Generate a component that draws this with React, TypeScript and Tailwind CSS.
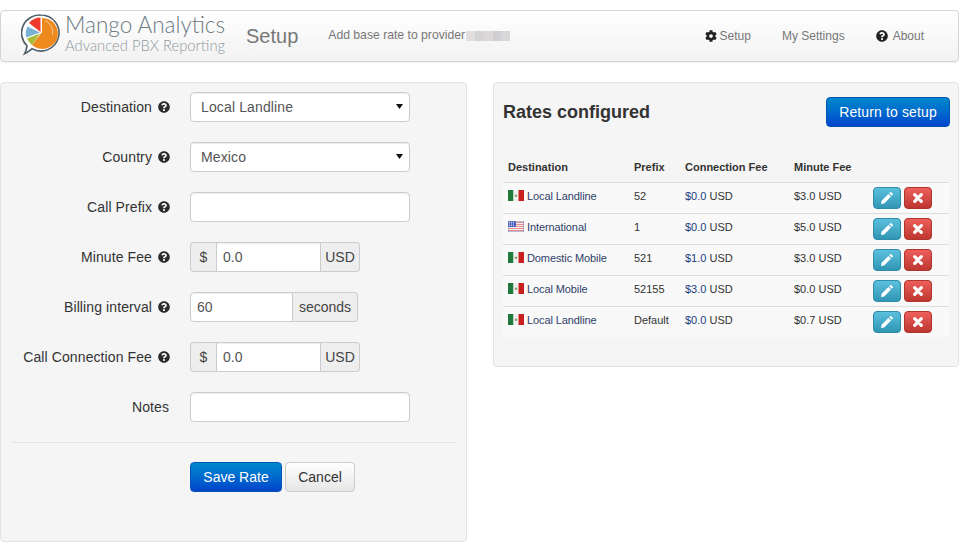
import React from "react";
import { FaCog, FaQuestionCircle } from "react-icons/fa";

const sans = "font-['Liberation_Sans',Arial,sans-serif]";

function Logo() {
  return (
    <svg width="42" height="46" viewBox="20 14 42 46" className="shrink-0">
      <path d="M40 16a18 18 0 1 1-9 33.600c-2 1.600-4 3.600-7.500 5.200c1.200-2.200 2.200-5 2.500-8A18 18 0 0 1 40 16z" fill="#fff" stroke="#4f5f69" strokeWidth="1.600" />
      <path d="M41 19a15.500 15.500 0 1 1-10 27l10-13z" fill="#ee8a1d" />
      <path d="M39.500 33L28 24a15 15 0 0 1 11.500-5.500z" fill="#ec3a2d" />
      <path d="M39 33.500L26.500 27.500a15 15 0 0 0-1.200 11z" fill="#78b1d3" />
      <path d="M39 34.500L26 39.500a15 15 0 0 0 5 6.500z" fill="#a7bd38" />
      <path d="M44 21.500a12.500 12.500 0 0 1 7.500 14" fill="none" stroke="#fff" strokeOpacity="0.7" strokeWidth="0.800" />
    </svg>
  );
}

function Help() {
  return <FaQuestionCircle className="text-[12px] text-[#2b2b2b] shrink-0" />;
}

function Row({ label, help = true, children }: { label: string; help?: boolean; children: React.ReactNode }) {
  return (
    <div className="flex items-center h-[30px] mb-5">
      <div className="w-[169px] shrink-0 flex items-center justify-end gap-[5px] text-[#333] text-[14px]">
        <span className="tracking-[0.1px] mr-[1px]">{label}</span>
        {help && <Help />}
      </div>
      <div className="ml-[20px]">{children}</div>
    </div>
  );
}

const inputCls = "h-[30px] bg-white border border-[#ccc] text-[14px] text-[#555] outline-none shadow-[inset_0_1px_1px_rgba(0,0,0,0.075)]";

function Sel({ value }: { value: string }) {
  return (
    <div className="relative w-[220px]">
      <select defaultValue={value} className={`${inputCls} w-full px-[10px] tracking-[0.13px] rounded-[4px] appearance-none`}>
        <option>{value}</option>
      </select>
      <svg width="7" height="5" viewBox="0 0 7 5" className="absolute right-[7px] top-[12px]">
        <path d="M0 0h7L3.500 5z" fill="#111" />
      </svg>
    </div>
  );
}

function Addon({ children, className = "" }: { children: React.ReactNode; className?: string }) {
  return (
    <span className={`h-[30px] flex items-center justify-center bg-[#eee] border border-[#ccc] text-[14px] text-[#444] ${className}`}>
      {children}
    </span>
  );
}

function MoneyInput() {
  return (
    <div className="flex">
      <Addon className="w-[26px] rounded-l-[4px] border-r-0">$</Addon>
      <input defaultValue="0.0" className={`${inputCls} w-[105px] px-[6px]`} />
      <Addon className="w-[39px] rounded-r-[4px] border-l-0">USD</Addon>
    </div>
  );
}

function Flag({ us }: { us?: boolean }) {
  if (us) {
    return (
      <svg width="16" height="11" viewBox="0 0 16 11" className="shrink-0 mt-[2px]">
        <rect width="16" height="11" fill="#f6f2f4" />
        <path d="M0 1.500h16M0 3.500h16M0 5.500h16M0 7.500h16M0 9.500h16" stroke="#e58a88" strokeWidth="1" />
        <rect width="8" height="6" fill="#4a62c0" />
        <path d="M1 1.500h6M1 3h6M1 4.500h6" stroke="#e6e9f8" strokeWidth="0.800" strokeDasharray="1 1" />
        <rect x="0.250" y="0.250" width="15.500" height="10.500" fill="none" stroke="#7c86b4" strokeWidth="0.500" />
      </svg>
    );
  }
  return (
    <svg width="16" height="11" viewBox="0 0 16 11" className="shrink-0 mt-[2px]">
      <rect width="5.500" height="11" fill="#1f7a3c" />
      <rect x="5.500" width="5" height="11" fill="#eef2ee" />
      <rect x="10.500" width="5.500" height="11" fill="#c8201f" />
      <circle cx="8" cy="5.700" r="1.300" fill="#9c9a78" />
    </svg>
  );
}

function PencilIcon() {
  return (
    <svg width="12" height="12" viewBox="0 0 12 12">
      <path d="M0 12l.6-3.200L7.400 2l2.600 2.600L3.200 11.400zM8.200 1.200L9.200.2a.7.7 0 0 1 1 0l1.600 1.600a.7.7 0 0 1 0 1l-1 1z" fill="#fff" />
    </svg>
  );
}

function CrossIcon() {
  return (
    <svg width="10" height="10" viewBox="0 0 10 10">
      <path d="M1.700 1.700l6.600 6.600M8.300 1.700L1.700 8.300" stroke="#fff" strokeWidth="3.200" strokeLinecap="round" />
    </svg>
  );
}

const rates = [
  ["Local Landline", "52", "$0.0 USD", "$3.0 USD", false],
  ["International", "1", "$0.0 USD", "$5.0 USD", true],
  ["Domestic Mobile", "521", "$1.0 USD", "$3.0 USD", false],
  ["Local Mobile", "52155", "$3.0 USD", "$0.0 USD", false],
  ["Local Landline", "Default", "$0.0 USD", "$0.7 USD", false],
] as const;

const blueBtn = "bg-gradient-to-b from-[#0088cc] to-[#0044cc] border border-[#0055b3] text-white rounded-[4px]";

export default function App() {
  return (
    <div className={`${sans} w-[959px] h-[556px] bg-white pt-[10px] overflow-hidden`}>
      <header className="h-[52px] flex items-center border border-[#d4d4d4] rounded-[4px] bg-gradient-to-b from-white to-[#f2f2f2] shadow-[0_1px_2px_rgba(0,0,0,0.06)]">
        <div className="ml-[20px]"><Logo /></div>
        <div className="ml-[2px] w-[169px] -mt-[6px] flex flex-col font-['Lato',sans-serif] font-light text-[#6d7a82] leading-none whitespace-nowrap">
          <span className="text-[22.500px] leading-[23px]">Mango Analytics</span>
          <span className="text-[14.800px] leading-[15px] mt-[2px] text-[#8f989e]">Advanced PBX Reporting</span>
        </div>
        <span className="ml-[12px] text-[20px] text-[#777] -mt-[1px]">Setup</span>
        <span className="ml-[30px] text-[12.200px] text-[#777] -mt-[1px]">Add base rate to provider</span>
        <span className="ml-[1px] -mt-[1px] flex h-[10px] w-[44px]">
          <span className="flex-1 bg-[#e2dedd]" />
          <span className="flex-1 bg-[#d4d4d6]" />
          <span className="flex-1 bg-[#dcd8d8]" />
          <span className="flex-1 bg-[#cfcfd1]" />
          <span className="flex-1 bg-[#d8d8da]" />
        </span>
        <nav className="ml-auto flex items-center text-[12px] text-[#777] -mt-[1px]">
          <span className="flex items-center gap-[3px]"><FaCog className="text-[12px] text-[#222]" />Setup</span>
          <span className="ml-[31px]">My Settings</span>
          <span className="ml-[31px] mr-[34px] flex items-center gap-[5px]"><FaQuestionCircle className="text-[12px] text-[#222]" />About</span>
        </nav>
      </header>

      <main className="flex mt-5 items-start">
        <section className="w-[467px] h-[460px] shrink-0 bg-[#f5f5f5] border border-[#e3e3e3] rounded-[4px] pt-[9px] px-[10px]">
          <div className="-ml-[10px]">
            <Row label="Destination"><Sel value="Local Landline" /></Row>
            <Row label="Country"><Sel value="Mexico" /></Row>
            <Row label="Call Prefix"><input className={`${inputCls} w-[220px] px-[6px] rounded-[4px]`} /></Row>
            <Row label="Minute Fee"><MoneyInput /></Row>
            <Row label="Billing interval">
              <div className="flex">
                <input defaultValue="60" className={`${inputCls} w-[103px] px-[6px] rounded-l-[4px]`} />
                <Addon className="w-[65px] rounded-r-[4px] border-l-0">seconds</Addon>
              </div>
            </Row>
            <Row label="Call Connection Fee"><MoneyInput /></Row>
            <Row label="Notes" help={false}><input className={`${inputCls} w-[220px] px-[6px] rounded-[4px]`} /></Row>
          </div>
          <div className="h-px bg-[#e5e5e5]" />
          <div className="flex gap-[3px] mt-[19px] ml-[179px]">
            <button className={`${blueBtn} w-[92px] h-[30px] text-[14px]`}>Save Rate</button>
            <button className="w-[70px] h-[30px] text-[14px] text-[#333] rounded-[4px] border border-[#ccc] bg-gradient-to-b from-white to-[#e6e6e6]">Cancel</button>
          </div>
        </section>

        <section className="ml-[26px] w-[466px] h-[285px] bg-[#f5f5f5] border border-[#e3e3e3] rounded-[4px] pt-[14px] pl-[9px] pr-[8px]">
          <div className="flex items-center justify-between h-[30px]">
            <h2 className="text-[18px] font-bold text-[#333]">Rates configured</h2>
            <button className={`${blueBtn} w-[124px] h-[30px] text-[14px] tracking-[0.13px]`}>Return to setup</button>
          </div>
          <table className="mt-[25px] w-[446px] table-fixed text-[11px] text-[#333] border-collapse">
            <colgroup>
              <col className="w-[131px]" />
              <col className="w-[51px]" />
              <col className="w-[109px]" />
              <col className="w-[79px]" />
              <col />
            </colgroup>
            <thead>
              <tr className="h-[30px] text-left">
                <th className="pl-[5px] font-bold">Destination</th>
                <th className="font-bold">Prefix</th>
                <th className="font-bold">Connection Fee</th>
                <th className="font-bold">Minute Fee</th>
                <th />
              </tr>
            </thead>
            <tbody>
              {rates.map((r, i) => (
                <tr key={i} className="h-[31px] bg-[#f9f9f9] border-t border-[#ddd]">
                  <td className="pl-[5px] align-top pt-[5px]">
                    <span className="flex items-start gap-[3px] text-[#2f3f68] whitespace-nowrap tracking-[-0.1px]">
                      <Flag us={r[4]} />
                      {r[0]}
                    </span>
                  </td>
                  <td className="align-top pt-[5px]">{r[1]}</td>
                  <td className="align-top pt-[5px]"><span className="text-[#1a3d7c]">{r[2].split(" ")[0]}</span> USD</td>
                  <td className="align-top pt-[5px]">{r[3]}</td>
                  <td className="align-top pt-[4px]">
                    <span className="flex gap-[3px]">
                      <span className="w-[28px] h-[22px] flex items-center justify-center rounded-[4px] bg-gradient-to-b from-[#5bc0de] to-[#2f96b4] border border-[#2f8cab]"><PencilIcon /></span>
                      <span className="w-[28px] h-[22px] flex items-center justify-center rounded-[4px] bg-gradient-to-b from-[#ee5f5b] to-[#bd362f] border border-[#b0352e]"><CrossIcon /></span>
                    </span>
                  </td>
                </tr>
              ))}
            </tbody>
          </table>
        </section>
      </main>
    </div>
  );
}
